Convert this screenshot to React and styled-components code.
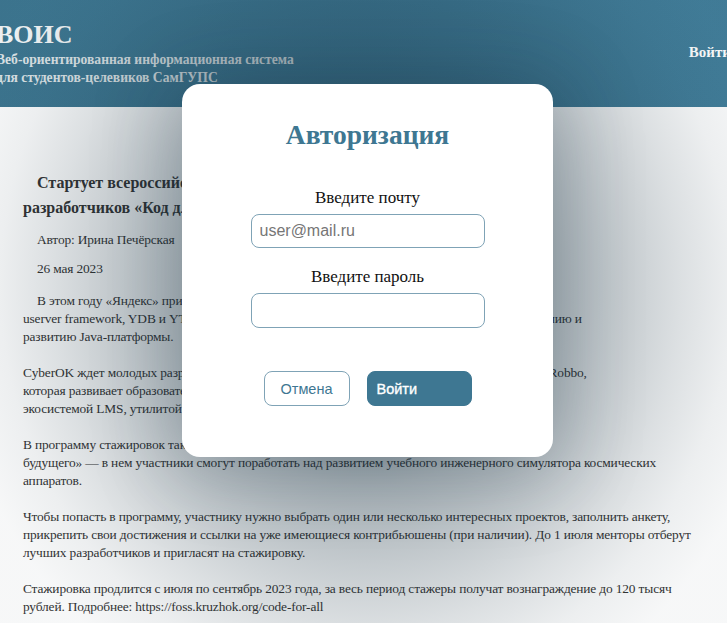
import React from "react";
import styled, { createGlobalStyle } from "styled-components";

const Global = createGlobalStyle`
  html, body { margin: 0; padding: 0; background: #ffffff; }
  body { font-family: "Liberation Serif", serif; overflow: hidden; }
`;

const Page = styled.div`
  position: relative;
  width: 727px;
  height: 623px;
  overflow: hidden;
  background: #ffffff;
`;

const Header = styled.header`
  height: 107px;
  background: linear-gradient(100deg, #3d7690 0%, #407b97 60%, #427e9a 100%);
  overflow: hidden;
`;

const HeaderRow = styled.div`
  width: 745px;
  height: 100%;
  margin-left: -4px;
  display: flex;
  align-items: center;
  justify-content: space-between;
`;

const Brand = styled.div`
  display: flex;
  flex-direction: column;
`;

const BrandTitle = styled.div`
  font-family: "Liberation Serif", serif;
  font-weight: 700;
  font-size: 26px;
  line-height: 28px;
  color: #f4f6f7;
  margin-bottom: 2px;
`;

const BrandSub = styled.div`
  font-family: "Liberation Serif", serif;
  font-weight: 700;
  font-size: 13.6px;
  line-height: 18px;
  color: #dfe5e8;
`;

const LoginLink = styled.div`
  font-family: "Liberation Serif", serif;
  font-weight: 700;
  font-size: 15px;
  color: #ffffff;
  padding-right: 10px;
  margin-top: -2px;
`;

const Main = styled.main`
  padding: 63px 19px 0 23px;
  color: #363636;
`;

const Heading = styled.h1`
  margin: 0;
  font-family: "Liberation Serif", serif;
  font-weight: 700;
  font-size: 16px;
  line-height: 25px;
  text-indent: 14px;
  color: #333333;
  white-space: nowrap;
`;

const Para = styled.p`
  margin: ${(p) => p.$mt || 18}px 0 0;
  font-family: "Liberation Serif", serif;
  font-size: 13.4px;
  line-height: 18px;
  color: #333333;
  white-space: nowrap;
  text-indent: ${(p) => (p.$indent ? "14px" : "0")};
  letter-spacing: -0.15px;
`;

const Backdrop = styled.div`
  position: absolute;
  inset: 0;
  z-index: 5;
  pointer-events: none;
  background: radial-gradient(
    ellipse 420px 460px at 366px 285px,
    rgba(20, 45, 60, 0.65) 0%,
    rgba(20, 45, 60, 0.5) 30%,
    rgba(20, 45, 60, 0.36) 44%,
    rgba(20, 45, 60, 0.25) 60%,
    rgba(20, 45, 60, 0.15) 75%,
    rgba(20, 45, 60, 0.08) 87%,
    rgba(20, 45, 60, 0.035) 100%
  );
`;

const Modal = styled.div`
  position: absolute;
  left: 182px;
  top: 84px;
  width: 371px;
  height: 373px;
  background: #ffffff;
  border-radius: 18px;
  box-shadow: 0 10px 80px 10px rgba(20, 45, 60, 0.25);
  display: flex;
  flex-direction: column;
  align-items: center;
  z-index: 10;
`;

const ModalTitle = styled.h2`
  margin: 36px 0 0;
  font-family: "Liberation Serif", serif;
  font-weight: 700;
  font-size: 27.5px;
  line-height: 30px;
  color: #3e7792;
`;

const Label = styled.label`
  margin-top: ${(p) => p.$mt}px;
  font-family: "Liberation Serif", serif;
  font-size: 17px;
  line-height: 20px;
  color: #111111;
`;

const Input = styled.input`
  box-sizing: border-box;
  margin-top: 6px;
  width: 234px;
  height: ${(p) => p.$h || 34}px;
  border: 1px solid #7fa3b6;
  border-radius: 8px;
  padding: 0 8px;
  font-family: "Liberation Sans", Arial, sans-serif;
  font-size: 16px;
  color: #333;
  outline: none;
  background: #fff;
  &::placeholder { color: #767676; }
`;

const ButtonRow = styled.div`
  margin-top: 43px;
  display: flex;
  gap: 17px;
`;

const Button = styled.button`
  box-sizing: border-box;
  height: 35px;
  width: ${(p) => p.$w}px;
  border-radius: 8px;
  font-family: "Liberation Sans", Arial, sans-serif;
  font-size: 14.5px;
  cursor: pointer;
  border: 1px solid ${(p) => (p.$primary ? "#3e7792" : "#7fa3b6")};
  background: ${(p) => (p.$primary ? "#3e7792" : "#ffffff")};
  color: ${(p) => (p.$primary ? "#ffffff" : "#3e7792")};
  -webkit-text-stroke: ${(p) => (p.$primary ? "0.35px #ffffff" : "0")};
  text-align: ${(p) => (p.$primary ? "left" : "center")};
  padding: 0 ${(p) => (p.$primary ? "9px" : "0")};
`;

export default function App() {
  return (
    <Page>
      <Global />
      <Header>
        <HeaderRow>
          <Brand>
            <BrandTitle>ВОИС</BrandTitle>
            <BrandSub>Веб-ориентированная информационная система</BrandSub>
            <BrandSub>для студентов-целевиков СамГУПС</BrandSub>
          </Brand>
          <LoginLink>Войти</LoginLink>
        </HeaderRow>
      </Header>
      <Main>
        <Heading>
          Стартует всероссийская программа стажировок для молодых
          <br />
          разработчиков «Код для всех»
        </Heading>
        <Para $indent $mt={11}>Автор: Ирина Печёрская</Para>
        <Para $indent $mt={11}>26 мая 2023</Para>
        <Para $indent $mt={14}>
          В этом году «Яндекс» приглашает поработать над проектами DivKit, Gravity UI, Hermione,
          <br />
          userver framework, YDB и YTsaurus, а «Аксиом» — над развитием открытого проекта по созданию и
          <br />
          развитию Java-платформы.
        </Para>
        <Para>
          CyberOK ждет молодых разработчиков в команду анализа защищенности, а EdTech-компания Robbo,
          <br />
          которая развивает образовательную робототехнику, ищет разработчиков для работы над
          <br />
          экосистемой LMS, утилитой RobboScratch и средами визуального программирования.
        </Para>
        <Para>
          В программу стажировок также вошел открытый проект компании «Образование
          <br />
          будущего» — в нем участники смогут поработать над развитием учебного инженерного симулятора космических
          <br />
          аппаратов.
        </Para>
        <Para>
          Чтобы попасть в программу, участнику нужно выбрать один или несколько интересных проектов, заполнить анкету,
          <br />
          прикрепить свои достижения и ссылки на уже имеющиеся контрибьюшены (при наличии). До 1 июля менторы отберут
          <br />
          лучших разработчиков и пригласят на стажировку.
        </Para>
        <Para>
          Стажировка продлится с июля по сентябрь 2023 года, за весь период стажеры получат вознаграждение до 120 тысяч
          <br />
          рублей. Подробнее: https://foss.kruzhok.org/code-for-all
        </Para>
      </Main>
      <Backdrop />
      <Modal>
        <ModalTitle>Авторизация</ModalTitle>
        <Label $mt={38}>Введите почту</Label>
        <Input type="email" placeholder="user@mail.ru" />
        <Label $mt={19}>Введите пароль</Label>
        <Input type="password" $h={35} />
        <ButtonRow>
          <Button $w={86}>Отмена</Button>
          <Button $primary $w={105}>Войти</Button>
        </ButtonRow>
      </Modal>
    </Page>
  );
}
